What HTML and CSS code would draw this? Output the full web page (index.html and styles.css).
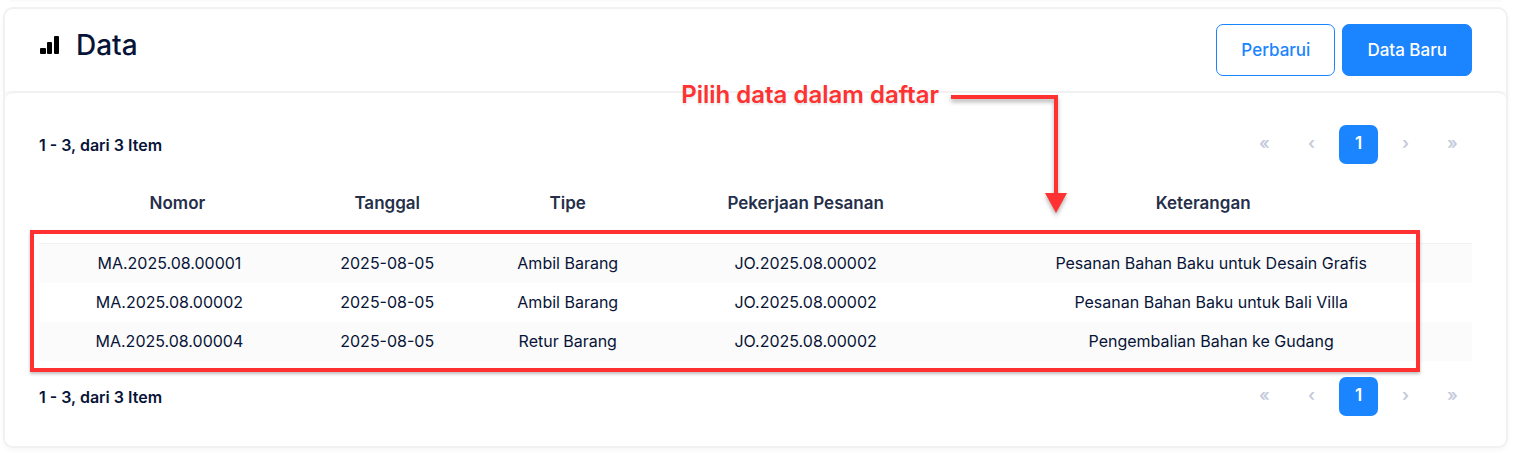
FILE: index.html
```html
<!DOCTYPE html>
<html lang="id">
<head>
<meta charset="utf-8">
<title>Data</title>
<link rel="stylesheet" href="styles.css">
</head>
<body>
<div class="previous-card"></div>
<main class="card">
  <header class="card-header">
    <div class="heading">
      <svg class="heading-icon" viewBox="0 0 20 22" aria-hidden="true">
        <rect x="0" y="14" width="6" height="6" rx="1"/>
        <rect x="7" y="8" width="5" height="12" rx="1"/>
        <rect x="14" y="2" width="5" height="18" rx="1"/>
      </svg>
      <h1 class="title">Data</h1>
    </div>
    <div class="actions">
      <button class="button button-outline" type="button">Perbarui</button>
      <button class="button button-primary" type="button">Data Baru</button>
    </div>
  </header>
  <div class="panel-frame">
    <section class="panel">
      <div class="toolbar">
        <span class="summary">1 - 3, dari 3 Item</span>
        <nav class="pager" aria-label="Halaman atas">
          <button class="page" type="button" disabled>«</button>
          <button class="page" type="button" disabled>‹</button>
          <button class="page page-current" type="button">1</button>
          <button class="page" type="button" disabled>›</button>
          <button class="page" type="button" disabled>»</button>
        </nav>
      </div>
      <div class="table-area">
        <table class="table">
          <colgroup>
            <col class="col-number"><col class="col-date"><col class="col-type"><col class="col-order"><col class="col-note">
          </colgroup>
          <thead>
            <tr><th>Nomor</th><th>Tanggal</th><th>Tipe</th><th>Pekerjaan Pesanan</th><th>Keterangan</th></tr>
          </thead>
          <tbody>
            <tr><td>MA.2025.08.00001</td><td>2025-08-05</td><td>Ambil Barang</td><td>JO.2025.08.00002</td><td>Pesanan Bahan Baku untuk Desain Grafis</td></tr>
            <tr><td>MA.2025.08.00002</td><td>2025-08-05</td><td>Ambil Barang</td><td>JO.2025.08.00002</td><td>Pesanan Bahan Baku untuk Bali Villa</td></tr>
            <tr><td>MA.2025.08.00004</td><td>2025-08-05</td><td>Retur Barang</td><td>JO.2025.08.00002</td><td>Pengembalian Bahan ke Gudang</td></tr>
          </tbody>
        </table>
        <div class="highlight"></div>
        <div class="callout">
          <span class="callout-text">Pilih data dalam daftar</span>
          <svg class="callout-arrow" viewBox="0 0 118 120" aria-hidden="true">
            <path d="M0 2H105V98" fill="none" stroke="#ff3131" stroke-width="4"/>
            <path d="M94 98H116L105 118Z" fill="#ff3131"/>
          </svg>
        </div>
      </div>
      <div class="toolbar toolbar-bottom">
        <span class="summary">1 - 3, dari 3 Item</span>
        <nav class="pager" aria-label="Halaman bawah">
          <button class="page" type="button" disabled>«</button>
          <button class="page" type="button" disabled>‹</button>
          <button class="page page-current" type="button">1</button>
          <button class="page" type="button" disabled>›</button>
          <button class="page" type="button" disabled>»</button>
        </nav>
      </div>
    </section>
  </div>
</main>
</body>
</html>
```
FILE: styles.css
```css
* {
  box-sizing: border-box;
}

body {
  margin: 0;
  padding: 0 7px 5px 3px;
  background: #fff;
  color: #071437;
  font-family: Inter, "Liberation Sans", sans-serif;
  font-size: 16px;
}

.previous-card {
  height: 1px;
  margin: 0 6px 6px;
  background: #fafafa;
  box-shadow: 0 1px 2px #f8f8f8;
}

.card {
  border: 2px solid #f1f1f2;
  border-radius: 10px;
  background: #fff;
  box-shadow: 0 3px 4px rgba(0, 0, 0, 0.03);
}

.card-header {
  display: flex;
  align-items: flex-start;
  justify-content: space-between;
  padding: 15px 34px;
}

.heading {
  display: flex;
  align-items: center;
  gap: 16px;
}

.heading-icon {
  width: 20px;
  height: 22px;
  margin-left: 1px;
  fill: #000;
}

.title {
  margin: 0;
  font-size: 28px;
  font-weight: 500;
  line-height: 42px;
}

.actions {
  display: flex;
  gap: 7px;
}

.button {
  height: 52px;
  padding: 0 24px;
  border: 1px solid #1b84ff;
  border-radius: 7px;
  font: 500 17px Inter, "Liberation Sans", sans-serif;
}

.button-outline {
  background: #fff;
  color: #1b84ff;
}

.button-primary {
  background: #1b84ff;
  color: #fff;
}

.panel-frame {
  border-radius: 0 0 8px 8px;
  background: #fafafa;
}

.panel {
  padding: 32px 34px 30px;
  border-top: 2px solid #f1f1f2;
  border-radius: 8px;
  background: #fff;
}

.toolbar {
  display: flex;
  align-items: center;
  justify-content: space-between;
}

.toolbar-bottom {
  margin-top: 16px;
}

.summary {
  font-size: 16px;
  font-weight: 600;
}

.pager {
  display: flex;
  gap: 8px;
}

.page {
  width: 39px;
  height: 39px;
  padding: 0 0 3px;
  border: 0;
  border-radius: 7px;
  background: transparent;
  color: #c4cada;
  font: 600 17px Inter, "Liberation Sans", sans-serif;
}

.page-current {
  background: #1b84ff;
  color: #fff;
}

.table-area {
  position: relative;
}

.table {
  width: 100%;
  border-collapse: separate;
  border-spacing: 0;
  table-layout: fixed;
  text-align: center;
}

.col-number { width: 18.2%; }
.col-date { width: 12.2%; }
.col-type { width: 13%; }
.col-order { width: 20.2%; }
.col-note { width: 36.4%; }

.table th {
  height: 80px;
  padding: 0 0 1px;
  border-bottom: 1px solid #f1f1f2;
  color: #252f4a;
  font-size: 17px;
  font-weight: 600;
}

.table th:first-child {
  padding-left: 16px;
}

.table th:last-child {
  padding-right: 16px;
}

.table td {
  height: 39px;
  padding: 0 0 2px;
}

.table tbody tr:nth-child(odd) {
  background: #fbfbfb;
}

.highlight {
  position: absolute;
  top: 66px;
  right: 52px;
  bottom: -11px;
  left: -9px;
  border: 4px solid #ff3131;
  box-shadow: 0 2px 3px rgba(0, 0, 0, 0.25);
  pointer-events: none;
}

.callout {
  position: absolute;
  top: -84px;
  right: 403px;
  display: flex;
  align-items: flex-start;
  gap: 12px;
  pointer-events: none;
}

.callout-text {
  color: #ff3131;
  font-size: 24px;
  font-weight: 600;
  line-height: 30px;
  text-shadow: 0 2px 2px rgba(0, 0, 0, 0.1);
}

.callout-arrow {
  width: 118px;
  height: 120px;
  margin-top: 15px;
  overflow: visible;
  filter: drop-shadow(0 3px 2px rgba(0, 0, 0, 0.3));
}
```
